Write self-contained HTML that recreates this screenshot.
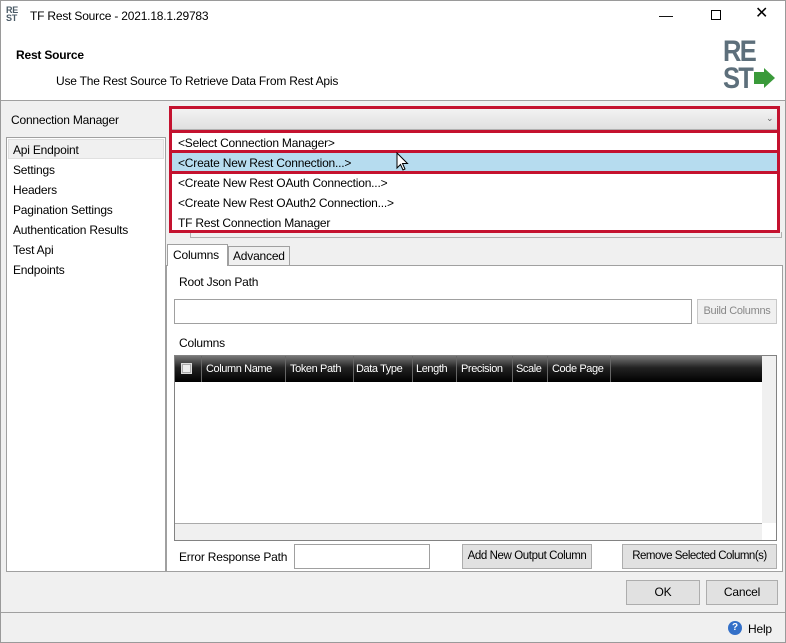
<!DOCTYPE html><html><head><style>
*{margin:0;padding:0;box-sizing:border-box}
body{width:786px;height:643px;position:relative;background:#f0f0f0;font-family:"Liberation Sans",sans-serif;font-size:12px;color:#000;overflow:hidden;letter-spacing:-0.2px}
.a{position:absolute}
.t{position:absolute;white-space:nowrap;line-height:14px}
.btn{position:absolute;background:#e1e1e1;border:1px solid #adadad;text-align:center;line-height:23px;white-space:nowrap;overflow:hidden}
</style></head><body>
<div class="a" style="left:0;top:0;width:786px;height:643px;border:1px solid #9a9a9a"></div>
<div class="a" style="left:1px;top:1px;width:784px;height:99px;background:#fff"></div>
<div class="a" style="left:1px;top:100px;width:784px;height:1px;background:#a0a0a0"></div>
<div class="t" style="left:6px;top:6px;font-size:9px;font-weight:bold;color:#4a5a66;line-height:8px">RE<br>ST</div>
<div class="t" style="left:30px;top:9px;font-size:12px">TF Rest Source - 2021.18.1.29783</div>
<div class="t" style="left:659px;top:8px;font-size:14px">&#8212;</div>
<div class="a" style="left:711px;top:10px;width:10px;height:10px;border:1px solid #000"></div>
<div class="t" style="left:755px;top:7px;font-size:16px">&#10005;</div>
<div class="t" style="left:16px;top:48px;font-weight:bold">Rest Source</div>
<div class="t" style="left:56px;top:74px">Use The Rest Source To Retrieve Data From Rest Apis</div>
<div class="t" style="left:723px;top:38px;font-size:30px;font-weight:bold;color:#5d6f7b;line-height:27px;letter-spacing:-2px;transform:scaleX(0.85);transform-origin:left">RE<br>ST</div>
<div class="a" style="left:754px;top:72px;width:10px;height:12px;background:#3a9a3a"></div>
<div class="a" style="left:764px;top:68px;width:0;height:0;border-top:10px solid transparent;border-bottom:10px solid transparent;border-left:11px solid #3a9a3a"></div>
<div class="t" style="left:11px;top:113px">Connection Manager</div>
<div class="a" style="left:6px;top:137px;width:160px;height:435px;background:#fff;border:1px solid #a0a0a0"></div>
<div class="a" style="left:8px;top:139px;width:156px;height:20px;background:#f0f0f0;border:1px solid #e0e0e0"></div>
<div class="t" style="left:13px;top:143px">Api Endpoint</div>
<div class="t" style="left:13px;top:163px">Settings</div>
<div class="t" style="left:13px;top:183px">Headers</div>
<div class="t" style="left:13px;top:203px">Pagination Settings</div>
<div class="t" style="left:13px;top:223px">Authentication Results</div>
<div class="t" style="left:13px;top:243px">Test Api</div>
<div class="t" style="left:13px;top:263px">Endpoints</div>
<div class="a" style="left:166px;top:265px;width:617px;height:307px;background:#fff;border:1px solid #a0a0a0"></div>
<div class="a" style="left:190px;top:232px;width:592px;height:6px;border:1px solid #b0b0b0;border-top:none;background:#f0f0f0"></div>
<div class="a" style="left:167px;top:244px;width:61px;height:22px;background:#fff;border:1px solid #a0a0a0;border-bottom:none"></div>
<div class="t" style="left:173px;top:248px">Columns</div>
<div class="a" style="left:228px;top:246px;width:62px;height:20px;background:#f0f0f0;border:1px solid #a0a0a0"></div>
<div class="t" style="left:233px;top:249px">Advanced</div>
<div class="t" style="left:179px;top:275px">Root Json Path</div>
<div class="a" style="left:174px;top:299px;width:518px;height:25px;border:1px solid #a0a0a0;background:#fff"></div>
<div class="btn" style="left:697px;top:299px;width:80px;height:25px;color:#888;background:#f0f0f0;border-color:#c8c8c8;font-size:11px;letter-spacing:-0.3px">Build Columns</div>
<div class="t" style="left:179px;top:336px">Columns</div>
<div class="a" style="left:174px;top:355px;width:603px;height:186px;border:1px solid #828282;background:#fff"></div>
<div class="a" style="left:175px;top:356px;width:587px;height:26px;background:linear-gradient(#777,#222 45%,#000)"></div>
<div class="a" style="left:181px;top:363px;width:11px;height:11px;border:1px solid #ddd;background:#aaa"></div>
<div class="a" style="left:183px;top:365px;width:7px;height:7px;background:#eee"></div>
<div class="a" style="left:175px;top:356px;width:587px;height:26px;color:#fff;font-size:11px;letter-spacing:-0.4px">
<div class="t" style="left:31px;top:6px">Column Name</div>
<div class="t" style="left:115px;top:6px">Token Path</div>
<div class="t" style="left:181px;top:6px">Data Type</div>
<div class="t" style="left:241px;top:6px">Length</div>
<div class="t" style="left:286px;top:6px">Precision</div>
<div class="t" style="left:341px;top:6px">Scale</div>
<div class="t" style="left:377px;top:6px">Code Page</div>
<div class="a" style="left:26px;top:0;width:1px;height:26px;background:#666"></div>
<div class="a" style="left:110px;top:0;width:1px;height:26px;background:#666"></div>
<div class="a" style="left:178px;top:0;width:1px;height:26px;background:#666"></div>
<div class="a" style="left:237px;top:0;width:1px;height:26px;background:#666"></div>
<div class="a" style="left:281px;top:0;width:1px;height:26px;background:#666"></div>
<div class="a" style="left:337px;top:0;width:1px;height:26px;background:#666"></div>
<div class="a" style="left:372px;top:0;width:1px;height:26px;background:#666"></div>
<div class="a" style="left:435px;top:0;width:1px;height:26px;background:#666"></div>
</div>
<div class="a" style="left:762px;top:356px;width:14px;height:167px;background:#f0f0f0"></div>
<div class="a" style="left:175px;top:523px;width:587px;height:17px;background:#f0f0f0;border-top:1px solid #aaa"></div>
<div class="t" style="left:179px;top:550px">Error Response Path</div>
<div class="a" style="left:294px;top:544px;width:136px;height:25px;border:1px solid #a0a0a0;background:#fff"></div>
<div class="btn" style="left:462px;top:544px;width:130px;height:25px;font-size:11.5px;letter-spacing:-0.4px">Add New Output Column</div>
<div class="btn" style="left:622px;top:544px;width:155px;height:25px;font-size:11.5px;letter-spacing:-0.5px">Remove Selected Column(s)</div>
<div class="btn" style="left:626px;top:580px;width:74px;height:25px">OK</div>
<div class="btn" style="left:706px;top:580px;width:72px;height:25px">Cancel</div>
<div class="a" style="left:1px;top:612px;width:784px;height:1px;background:#a0a0a0"></div>
<div class="a" style="left:728px;top:621px;width:14px;height:14px;border-radius:50%;background:#3470c8;color:#fff;font-size:10px;font-weight:bold;text-align:center;line-height:14px">?</div>
<div class="t" style="left:748px;top:622px">Help</div>
<div class="a" style="left:169px;top:106px;width:611px;height:127px;border:3px solid #c4122f;background:#fff"></div>
<div class="a" style="left:172px;top:109px;width:605px;height:21px;background:linear-gradient(#f2f2f2,#e0e0e0);border-bottom:1px solid #b0b0b0"></div>
<div class="t" style="left:766px;top:111px;font-size:9px;color:#666">&#8964;</div>
<div class="a" style="left:169px;top:130px;width:611px;height:3px;background:#c4122f"></div>
<div class="a" style="left:169px;top:150px;width:611px;height:24px;border:3px solid #c4122f;background:#b6dcef"></div>
<div class="t" style="left:178px;top:136px">&lt;Select Connection Manager&gt;</div>
<div class="t" style="left:178px;top:156px">&lt;Create New Rest Connection...&gt;</div>
<div class="t" style="left:178px;top:176px">&lt;Create New Rest OAuth Connection...&gt;</div>
<div class="t" style="left:178px;top:196px">&lt;Create New Rest OAuth2 Connection...&gt;</div>
<div class="t" style="left:178px;top:216px">TF Rest Connection Manager</div>
<svg class="a" style="left:396px;top:152px" width="13" height="20" viewBox="0 0 13 20"><path d="M1 1 L1 16 L4.5 12.5 L7 18 L9 17 L6.5 11.5 L11.5 11.5 Z" fill="#fff" stroke="#000" stroke-width="1"/></svg>
</body></html>
